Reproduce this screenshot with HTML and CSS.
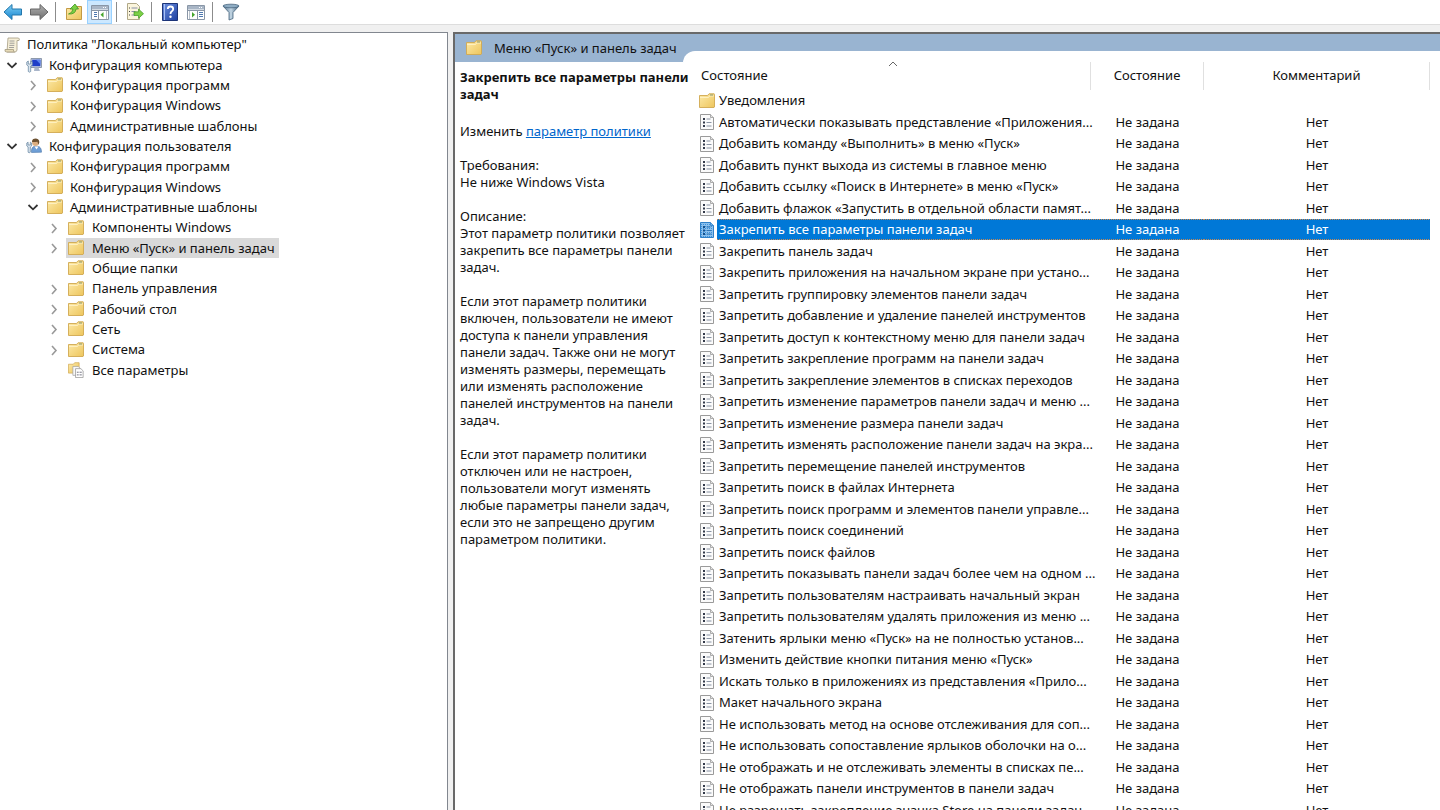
FILE: index.html
```
<!DOCTYPE html>
<html lang="ru">
<head>
    <meta charset="UTF-8">
    <meta name="viewport" content="width=device-width, initial-scale=1.0">
    <title>Редактор локальной групповой политики</title>
    <link rel="stylesheet" href="styles.css">
</head>
<body>
    <svg class="sprite" aria-hidden="true">
        <defs>
            <linearGradient id="g-folder" x1="0" y1="0" x2="1" y2="1">
                <stop offset="0" stop-color="#fdeaa8"/>
                <stop offset="1" stop-color="#edc55c"/>
            </linearGradient>
            <linearGradient id="g-blue" x1="0" y1="0" x2="0" y2="1">
                <stop offset="0" stop-color="#7fd0f5"/>
                <stop offset="1" stop-color="#1583cf"/>
            </linearGradient>
            <linearGradient id="g-grey" x1="0" y1="0" x2="0" y2="1">
                <stop offset="0" stop-color="#b0b0b0"/>
                <stop offset="1" stop-color="#707070"/>
            </linearGradient>
            <linearGradient id="g-help" x1="0" y1="0" x2="1" y2="1">
                <stop offset="0" stop-color="#6b8fe0"/>
                <stop offset="1" stop-color="#1d3f9f"/>
            </linearGradient>
            <linearGradient id="g-funnel" x1="0" y1="0" x2="1" y2="0">
                <stop offset="0" stop-color="#4f6f8a"/>
                <stop offset=".5" stop-color="#c3d6e4"/>
                <stop offset="1" stop-color="#3f5f7a"/>
            </linearGradient>
        </defs>
        <symbol id="folder" viewBox="0 0 16 16">
            <path d="M.5 14.5V2.5H8.5L10 .8h5.2l.3.7v12.500l-.5.5z" fill="url(#g-folder)" stroke="#d0a850" stroke-width=".9"/>
            <path d="M1 4.500h8.500l1-1.500h4.500" fill="none" stroke="#fff4cc" stroke-width=".8"/>
            <path d="M11 2h3" stroke="#8a9a70" stroke-width="1"/>
        </symbol>
        <symbol id="policy" viewBox="0 0 16 16">
            <path d="M1.500.5h10l3 3v12h-13z" fill="#fbfbfb" stroke="#9a9a9a"/>
            <path d="M11.500.5v3h3" fill="#e4e4e4" stroke="#9a9a9a" stroke-width=".8"/>
            <path d="M4 4h2v2H4zM4 7.500h2v2H4zM4 11h2v2H4z" fill="#333a4a"/>
            <path d="M7.500 5h4M7.500 8.500h5M7.500 12h5" stroke="#8a94a4" stroke-width="1"/>
        </symbol>
        <symbol id="policy-selected" viewBox="0 0 16 16">
            <path d="M1.500.5h10l3 3v12h-13z" fill="#8cc0ec" stroke="#2f80c8"/>
            <path d="M11.500.5v3h3" fill="#6aaee6" stroke="#2f80c8" stroke-width=".8"/>
            <path d="M2 2.500h9M2 4.500h12M2 6.500h12M2 8.500h12M2 10.500h12M2 12.500h12M2 14.500h12" stroke="#3a92dd" stroke-width="1" stroke-dasharray="1 1"/>
            <path d="M4 4h2v2H4zM4 7.500h2v2H4zM4 11h2v2H4z" fill="#14508c"/>
            <path d="M7.500 5h4M7.500 8.500h5M7.500 12h5" stroke="#2f74b4" stroke-width="1"/>
        </symbol>
        <symbol id="scroll" viewBox="0 0 16 16">
            <path d="M4 1h10.500q1.500.8.5 2.500h-2V13q-.5 2-2 2H3z" fill="#f6efd8" stroke="#a39a80" stroke-width=".8"/>
            <path d="M1 12.500h8.500q-.5 2 1 2.500H2.500Q.5 15 1 12.500z" fill="#e6dab6" stroke="#a39a80" stroke-width=".8"/>
            <path d="M5.500 4h5M5.500 6.200h5M5.300 8.400h5M5 10.500h5" stroke="#8c8c8c" stroke-width=".8"/>
        </symbol>
        <symbol id="computer" viewBox="0 0 16 16">
            <path d="M5 1.500h10.500v9H5z" fill="#c7d0de" stroke="#7a869c" stroke-width=".8"/>
            <path d="M6.200 2.700h8.200v6.500H6.200z" fill="#1f3fc8"/>
            <path d="M10 2.700h4.400v4.500z" fill="#5e86f0"/>
            <path d="M8.500 10.500h4l1.500 3.500H8z" fill="#aab6ca"/>
            <path d="M.8 5v3l1.500 1v5.500q1.200 1.300 2.400 0V9l1.500-1V5L4.700 4v3H2.300V4z" fill="#dbe5ee" stroke="#5f7f9c" stroke-width=".7"/>
        </symbol>
        <symbol id="user" viewBox="0 0 16 16">
            <path d="M5.500 14.500Q5 8.500 9 8.200h2.500q4 .5 4 6z" fill="#6f9fd6" stroke="#4a76a8" stroke-width=".6"/>
            <path d="M8.500 8.500l2 3 2-3z" fill="#fff"/>
            <circle cx="9.500" cy="4.500" r="3.400" fill="#dcae80"/>
            <path d="M6 4Q6 .5 10 .6q3.500.4 3.300 4l-1 2.200-.8-3Q8 4.200 6 4z" fill="#6b5030"/>
            <path d="M.8 5v3l1.300 1v5.200q1 1.200 2.200 0V9l1.300-1V5l-1.300-.8V7H2.100V4.200z" fill="#dbe5ee" stroke="#5f7f9c" stroke-width=".7"/>
        </symbol>
        <symbol id="all" viewBox="0 0 18 18">
            <path d="M.5 12.500v-10H6L7.500.8h5v11.700z" fill="url(#g-folder)" stroke="#d0a850" stroke-width=".8"/>
            <path d="M5.500 5h6l2 2v8h-8z" fill="#f8f8f8" stroke="#a0a0a0" stroke-width=".8"/>
            <path d="M8.500 7.500h6l2.500 2.500v7.500H8.500z" fill="#fff" stroke="#909090" stroke-width=".8"/>
            <path d="M10 11.500h2M13 11.500h2.500M10 14.500h2M13 14.500h2.500" stroke="#667" stroke-width="1"/>
        </symbol>
        <symbol id="open" viewBox="0 0 12 12">
            <path d="M1.500 4l4.500 4.300L10.500 4" fill="none" stroke="#333" stroke-width="1.800"/>
        </symbol>
        <symbol id="closed" viewBox="0 0 12 12">
            <path d="M4 2l4 4.500L4 11" fill="none" stroke="#999" stroke-width="1.600"/>
        </symbol>
    </svg>

    <header class="toolbar">
        <button type="button" aria-label="Назад">
            <svg width="20" height="18" viewBox="0 0 20 18"><path d="M1 9l8-7.500v4.500h9.500v6H9v4.500z" fill="url(#g-blue)" stroke="#2478ac"/></svg>
        </button>
        <button type="button" aria-label="Вперёд">
            <svg width="20" height="18" viewBox="0 0 20 18"><path d="M19 9l-8-7.500v4.500H1.500v6H11v4.500z" fill="url(#g-grey)" stroke="#666"/></svg>
        </button>
        <span class="sep"></span>
        <button type="button" aria-label="На уровень вверх">
            <svg width="18" height="18" viewBox="0 0 18 18"><path d="M1.500 16.500v-11h8l1.500-2h5.500v13z" fill="url(#g-folder)" stroke="#c39a45"/><path d="M3.500 11q4-1 4.500-5H5l5-5 3.500 5H11q-.5 5.500-7.500 5z" fill="#7bd044" stroke="#3d9422" stroke-width=".8"/></svg>
        </button>
        <button type="button" class="pressed" aria-label="Дерево консоли">
            <svg width="18" height="18" viewBox="0 0 18 18"><path d="M.5 2.500h17v14H.5z" fill="#fff" stroke="#8996a6"/><path d="M1 3h16v3.500H1z" fill="#a9b6c6"/><path d="M12 4.500h1M14 4.500h1" stroke="#fff"/><path d="M1 7.500h16M7.500 7v9" stroke="#8996a6"/><path d="M3 9.500h3M3 11.500h3M3 13.500h3" stroke="#4e79b0"/><path d="M12.500 9v5.500L9.500 11.800z" fill="#45a52c"/><path d="M15.500 8v8" stroke="#b9c2cc"/></svg>
        </button>
        <span class="sep"></span>
        <button type="button" aria-label="Экспортировать список">
            <svg width="18" height="18" viewBox="0 0 18 18"><path d="M1.500.5h9l3 3v13h-12z" fill="#fbf5dc" stroke="#b0a888"/><path d="M3 5h1M3 8.500h1M3 12h1" stroke="#444" stroke-width="1.200"/><path d="M5.500 5h6M5.500 8.500h4M5.500 12h4" stroke="#8990a8"/><path d="M8 8.800h4.500V6l5 4.700-5 4.700v-2.900H8z" fill="#7bd044" stroke="#3d9422" stroke-width=".7"/></svg>
        </button>
        <span class="sep"></span>
        <button type="button" class="help" aria-label="Справка">
            <svg width="16" height="18" viewBox="0 0 16 18"><path d="M.5.5h15v17H.5z" fill="url(#g-help)" stroke="#1c3478"/><path d="M2.500 1v16" stroke="#a9c0f4"/><path d="M5.800 6q0-2.500 2.700-2.500T11.200 6q0 1.500-1.600 2.500-1.100.8-1.100 2.500" fill="none" stroke="#fff" stroke-width="1.800"/><circle cx="8.500" cy="13.700" r="1.200" fill="#fff"/></svg>
        </button>
        <button type="button" aria-label="Панель действий">
            <svg width="18" height="18" viewBox="0 0 18 18"><path d="M.5 2.500h17v14H.5z" fill="#fff" stroke="#8996a6"/><path d="M1 3h16v3.500H1z" fill="#a9b6c6"/><path d="M12 4.500h1M14 4.500h1" stroke="#fff"/><path d="M1 7.500h16M10.500 7v9" stroke="#8996a6"/><path d="M12 9.500h4M12 11.500h4M12 13.500h4" stroke="#4e79b0"/><path d="M5 9v5.500l3-2.700z" fill="#45a52c"/><path d="M2.500 8v8" stroke="#b9c2cc"/></svg>
        </button>
        <span class="sep"></span>
        <button type="button" aria-label="Фильтр">
            <svg width="18" height="18" viewBox="0 0 18 18"><path d="M1 3l6 6.500V17l4-1.500v-6L17 3z" fill="url(#g-funnel)" stroke="#48657e" stroke-width=".8"/><ellipse cx="9" cy="3" rx="8" ry="1.800" fill="#8fadc4" stroke="#48657e" stroke-width=".8"/></svg>
        </button>
    </header>

    <main class="panes">
        <nav class="tree-pane">
            <ul class="tree">
                <li class="root"><span class="node"><svg><use href="#scroll"/></svg>Политика "Локальный компьютер"</span></li>
                <li class="level1"><button type="button" aria-label="Свернуть"><svg><use href="#open"/></svg></button><span class="node"><svg><use href="#computer"/></svg>Конфигурация компьютера</span></li>
                <li class="level2"><button type="button" aria-label="Развернуть"><svg><use href="#closed"/></svg></button><span class="node"><svg><use href="#folder"/></svg>Конфигурация программ</span></li>
                <li class="level2"><button type="button" aria-label="Развернуть"><svg><use href="#closed"/></svg></button><span class="node"><svg><use href="#folder"/></svg>Конфигурация Windows</span></li>
                <li class="level2"><button type="button" aria-label="Развернуть"><svg><use href="#closed"/></svg></button><span class="node"><svg><use href="#folder"/></svg>Административные шаблоны</span></li>
                <li class="level1"><button type="button" aria-label="Свернуть"><svg><use href="#open"/></svg></button><span class="node"><svg><use href="#user"/></svg>Конфигурация пользователя</span></li>
                <li class="level2"><button type="button" aria-label="Развернуть"><svg><use href="#closed"/></svg></button><span class="node"><svg><use href="#folder"/></svg>Конфигурация программ</span></li>
                <li class="level2"><button type="button" aria-label="Развернуть"><svg><use href="#closed"/></svg></button><span class="node"><svg><use href="#folder"/></svg>Конфигурация Windows</span></li>
                <li class="level2"><button type="button" aria-label="Свернуть"><svg><use href="#open"/></svg></button><span class="node"><svg><use href="#folder"/></svg>Административные шаблоны</span></li>
                <li class="level3"><button type="button" aria-label="Развернуть"><svg><use href="#closed"/></svg></button><span class="node"><svg><use href="#folder"/></svg>Компоненты Windows</span></li>
                <li class="level3"><button type="button" aria-label="Развернуть"><svg><use href="#closed"/></svg></button><span class="node current"><svg><use href="#folder"/></svg>Меню «Пуск» и панель задач</span></li>
                <li class="level3 leaf"><span class="node"><svg><use href="#folder"/></svg>Общие папки</span></li>
                <li class="level3"><button type="button" aria-label="Развернуть"><svg><use href="#closed"/></svg></button><span class="node"><svg><use href="#folder"/></svg>Панель управления</span></li>
                <li class="level3"><button type="button" aria-label="Развернуть"><svg><use href="#closed"/></svg></button><span class="node"><svg><use href="#folder"/></svg>Рабочий стол</span></li>
                <li class="level3"><button type="button" aria-label="Развернуть"><svg><use href="#closed"/></svg></button><span class="node"><svg><use href="#folder"/></svg>Сеть</span></li>
                <li class="level3"><button type="button" aria-label="Развернуть"><svg><use href="#closed"/></svg></button><span class="node"><svg><use href="#folder"/></svg>Система</span></li>
                <li class="level3 leaf"><span class="node"><svg><use href="#all"/></svg>Все параметры</span></li>
            </ul>
        </nav>

        <section class="result-pane">
            <h1 class="title"><svg><use href="#folder"/></svg>Меню «Пуск» и панель задач</h1>
            <div class="result-body">
                <article class="description">
                    <h2>Закрепить все параметры панели задач</h2>
                    <p>Изменить <a href="#">параметр политики</a></p>
                    <p>Требования:<br>Не ниже Windows Vista</p>
                    <p>Описание:<br>Этот параметр политики позволяет закрепить все параметры панели задач.</p>
                    <p>Если этот параметр политики включен, пользователи не имеют доступа к панели управления панели задач. Также они не могут изменять размеры, перемещать или изменять расположение панелей инструментов на панели задач.</p>
                    <p>Если этот параметр политики отключен или не настроен, пользователи могут изменять любые параметры панели задач, если это не запрещено другим параметром политики.</p>
                </article>

                <div class="list">
                    <table>
                        <thead>
                            <tr>
                                <th class="col-name"><button type="button">Состояние</button><svg class="sort" width="10" height="6" viewBox="0 0 10 6"><path d="M1 5l4-4 4 4" fill="none" stroke="#666"/></svg></th>
                                <th class="col-state"><button type="button">Состояние</button></th>
                                <th class="col-comment"><button type="button">Комментарий</button></th>
                            </tr>
                        </thead>
                        <tbody>
                            <tr><td><div class="name"><svg><use href="#folder"/></svg><span>Уведомления</span></div></td><td></td><td></td></tr>
                            <tr><td><div class="name"><svg><use href="#policy"/></svg><span>Автоматически показывать представление «Приложения...</span></div></td><td>Не задана</td><td>Нет</td></tr>
                            <tr><td><div class="name"><svg><use href="#policy"/></svg><span>Добавить команду «Выполнить» в меню «Пуск»</span></div></td><td>Не задана</td><td>Нет</td></tr>
                            <tr><td><div class="name"><svg><use href="#policy"/></svg><span>Добавить пункт выхода из системы в главное меню</span></div></td><td>Не задана</td><td>Нет</td></tr>
                            <tr><td><div class="name"><svg><use href="#policy"/></svg><span>Добавить ссылку «Поиск в Интернете» в меню «Пуск»</span></div></td><td>Не задана</td><td>Нет</td></tr>
                            <tr><td><div class="name"><svg><use href="#policy"/></svg><span>Добавить флажок «Запустить в отдельной области памят...</span></div></td><td>Не задана</td><td>Нет</td></tr>
                            <tr class="selected"><td><div class="name"><svg><use href="#policy-selected"/></svg><span>Закрепить все параметры панели задач</span></div></td><td>Не задана</td><td>Нет</td></tr>
                            <tr><td><div class="name"><svg><use href="#policy"/></svg><span>Закрепить панель задач</span></div></td><td>Не задана</td><td>Нет</td></tr>
                            <tr><td><div class="name"><svg><use href="#policy"/></svg><span>Закрепить приложения на начальном экране при устано...</span></div></td><td>Не задана</td><td>Нет</td></tr>
                            <tr><td><div class="name"><svg><use href="#policy"/></svg><span>Запретить группировку элементов панели задач</span></div></td><td>Не задана</td><td>Нет</td></tr>
                            <tr><td><div class="name"><svg><use href="#policy"/></svg><span>Запретить добавление и удаление панелей инструментов</span></div></td><td>Не задана</td><td>Нет</td></tr>
                            <tr><td><div class="name"><svg><use href="#policy"/></svg><span>Запретить доступ к контекстному меню для панели задач</span></div></td><td>Не задана</td><td>Нет</td></tr>
                            <tr><td><div class="name"><svg><use href="#policy"/></svg><span>Запретить закрепление программ на панели задач</span></div></td><td>Не задана</td><td>Нет</td></tr>
                            <tr><td><div class="name"><svg><use href="#policy"/></svg><span>Запретить закрепление элементов в списках переходов</span></div></td><td>Не задана</td><td>Нет</td></tr>
                            <tr><td><div class="name"><svg><use href="#policy"/></svg><span>Запретить изменение параметров панели задач и меню ...</span></div></td><td>Не задана</td><td>Нет</td></tr>
                            <tr><td><div class="name"><svg><use href="#policy"/></svg><span>Запретить изменение размера панели задач</span></div></td><td>Не задана</td><td>Нет</td></tr>
                            <tr><td><div class="name"><svg><use href="#policy"/></svg><span>Запретить изменять расположение панели задач на экра...</span></div></td><td>Не задана</td><td>Нет</td></tr>
                            <tr><td><div class="name"><svg><use href="#policy"/></svg><span>Запретить перемещение панелей инструментов</span></div></td><td>Не задана</td><td>Нет</td></tr>
                            <tr><td><div class="name"><svg><use href="#policy"/></svg><span>Запретить поиск в файлах Интернета</span></div></td><td>Не задана</td><td>Нет</td></tr>
                            <tr><td><div class="name"><svg><use href="#policy"/></svg><span>Запретить поиск программ и элементов панели управле...</span></div></td><td>Не задана</td><td>Нет</td></tr>
                            <tr><td><div class="name"><svg><use href="#policy"/></svg><span>Запретить поиск соединений</span></div></td><td>Не задана</td><td>Нет</td></tr>
                            <tr><td><div class="name"><svg><use href="#policy"/></svg><span>Запретить поиск файлов</span></div></td><td>Не задана</td><td>Нет</td></tr>
                            <tr><td><div class="name"><svg><use href="#policy"/></svg><span>Запретить показывать панели задач более чем на одном ...</span></div></td><td>Не задана</td><td>Нет</td></tr>
                            <tr><td><div class="name"><svg><use href="#policy"/></svg><span>Запретить пользователям настраивать начальный экран</span></div></td><td>Не задана</td><td>Нет</td></tr>
                            <tr><td><div class="name"><svg><use href="#policy"/></svg><span>Запретить пользователям удалять приложения из меню ...</span></div></td><td>Не задана</td><td>Нет</td></tr>
                            <tr><td><div class="name"><svg><use href="#policy"/></svg><span>Затенить ярлыки меню «Пуск» на не полностью установ...</span></div></td><td>Не задана</td><td>Нет</td></tr>
                            <tr><td><div class="name"><svg><use href="#policy"/></svg><span>Изменить действие кнопки питания меню «Пуск»</span></div></td><td>Не задана</td><td>Нет</td></tr>
                            <tr><td><div class="name"><svg><use href="#policy"/></svg><span>Искать только в приложениях из представления «Прило...</span></div></td><td>Не задана</td><td>Нет</td></tr>
                            <tr><td><div class="name"><svg><use href="#policy"/></svg><span>Макет начального экрана</span></div></td><td>Не задана</td><td>Нет</td></tr>
                            <tr><td><div class="name"><svg><use href="#policy"/></svg><span>Не использовать метод на основе отслеживания для соп...</span></div></td><td>Не задана</td><td>Нет</td></tr>
                            <tr><td><div class="name"><svg><use href="#policy"/></svg><span>Не использовать сопоставление ярлыков оболочки на о...</span></div></td><td>Не задана</td><td>Нет</td></tr>
                            <tr><td><div class="name"><svg><use href="#policy"/></svg><span>Не отображать и не отслеживать элементы в списках пе...</span></div></td><td>Не задана</td><td>Нет</td></tr>
                            <tr><td><div class="name"><svg><use href="#policy"/></svg><span>Не отображать панели инструментов в панели задач</span></div></td><td>Не задана</td><td>Нет</td></tr>
                            <tr><td><div class="name"><svg><use href="#policy"/></svg><span>Не разрешать закрепление значка Store на панели задач</span></div></td><td>Не задана</td><td>Нет</td></tr>
                        </tbody>
                    </table>
                </div>
            </div>
        </section>
    </main>
</body>
</html>
```

FILE: styles.css
```
* {
    box-sizing: border-box;
}

body {
    margin: 0;
    height: 100vh;
    display: flex;
    flex-direction: column;
    overflow: hidden;
    background: #f0f0f0;
    color: #111;
    font-family: "Noto Sans", "Open Sans", sans-serif;
    font-size: 13px;
    line-height: 17px;
}

svg {
    flex: none;
    width: 16px;
    height: 16px;
}

button {
    border: none;
    padding: 0;
    background: none;
    color: inherit;
    font: inherit;
}

.sprite {
    position: absolute;
    width: 0;
    height: 0;
}

/* toolbar */
.toolbar {
    display: flex;
    align-items: center;
    gap: 1px;
    flex: none;
    height: 25px;
    background: #fff;
    border-bottom: 1px solid #ddd;
}

.toolbar button {
    display: flex;
    align-items: center;
    justify-content: center;
    width: 25px;
    height: 24px;
}

.toolbar svg {
    width: 20px;
    height: 18px;
}

.toolbar .help svg {
    width: 16px;
}

.toolbar .pressed {
    background: #cce8ff;
    border: 1px solid #99d1ff;
}

.sep {
    width: 1px;
    height: 20px;
    margin: 0 4px 0 3px;
    background: #8c8c8c;
}

/* panes */
.panes {
    flex: 1;
    display: flex;
    gap: 5px;
    min-height: 0;
    margin-top: 7px;
}

.tree-pane {
    flex: none;
    width: 448px;
    background: #fff;
    border: 1px solid #82878f;
    border-width: 1px 1px 0 0;
}

.tree {
    list-style: none;
    margin: 0;
    padding: 1px 0 0;
}

.tree li {
    display: flex;
    align-items: center;
    gap: 6px;
    height: 20px;
}

.tree li:nth-child(3n + 1) {
    height: 21px;
}

.tree button,
.tree button svg {
    display: block;
    width: 12px;
    height: 12px;
}

.tree .root {
    padding-left: 2px;
}

.tree .level1 {
    padding-left: 6px;
}

.tree .level2 {
    padding-left: 27px;
}

.tree .level3 {
    padding-left: 48px;
}

.tree .leaf {
    padding-left: 66px;
}

.node {
    display: flex;
    align-items: center;
    gap: 7px;
    height: 20px;
    padding: 0 4px 0 2px;
}

.level3 .node {
    gap: 8px;
}

.node.current {
    background: #d9d9d9;
}

/* right side */
.result-pane {
    flex: 1;
    display: flex;
    flex-direction: column;
    min-width: 0;
    background: #99b4d1;
    border: 2px solid #696969;
    border-width: 2px 0 0 2px;
}

.title {
    display: flex;
    align-items: center;
    gap: 12px;
    flex: none;
    height: 28px;
    margin: 0;
    padding-left: 11px;
    font-size: 13px;
    font-weight: normal;
}

.result-body {
    flex: 1;
    display: flex;
    min-height: 0;
}

.description {
    position: relative;
    z-index: 1;
    flex: none;
    width: 228px;
    padding: 7px 0 0 5px;
    background: #fff;
}

/* the text may run a little into the list's left padding */
.description h2 {
    margin: 0 -12px 20px 0;
    font-size: 13px;
}

.description p {
    margin: 0 -4px 17px 0;
}

.description a {
    color: #0066cc;
}

/* the list rises over the blue title as a rounded tab */
.list {
    flex: 1;
    min-width: 0;
    margin-top: -11px;
    padding: 0 10px 0 16px;
    background: #fff;
    border-radius: 12px 0 0 0;
    overflow: hidden;
}

table {
    width: 100%;
    table-layout: fixed;
    border-collapse: collapse;
}

th {
    position: relative;
    height: 39px;
    padding: 10px 0 0;
    font-weight: normal;
}

th button {
    display: block;
    width: 100%;
    height: 28px;
    border-right: 1px solid #e0e0e0;
}

.col-name button {
    padding-left: 2px;
    text-align: left;
}

.col-state {
    width: 113px;
}

.col-comment {
    width: 226px;
}

.sort {
    position: absolute;
    top: 10px;
    left: 50%;
    width: 10px;
    height: 6px;
    margin-left: -7px;
}

td {
    height: 21px;
    padding: 0;
    text-align: center;
}

tbody tr:nth-child(even) td {
    height: 22px;
}

.name {
    display: flex;
    align-items: center;
    height: 21px;
    gap: 2px;
    text-align: left;
}

.name span {
    flex: 1;
    min-width: 0;
    padding: 2px;
    white-space: nowrap;
}

.selected {
    color: #fff;
}

/* dotted focus line above and below the selected row */
.selected td,
.selected .name span {
    background:
        repeating-linear-gradient(90deg, #c98a55 0 1px, #0078d7 1px 2px) top / 100% 1px no-repeat,
        repeating-linear-gradient(90deg, #c98a55 0 1px, #0078d7 1px 2px) bottom / 100% 1px no-repeat,
        #0078d7;
}

.selected td:first-child {
    background: none;
}
```
